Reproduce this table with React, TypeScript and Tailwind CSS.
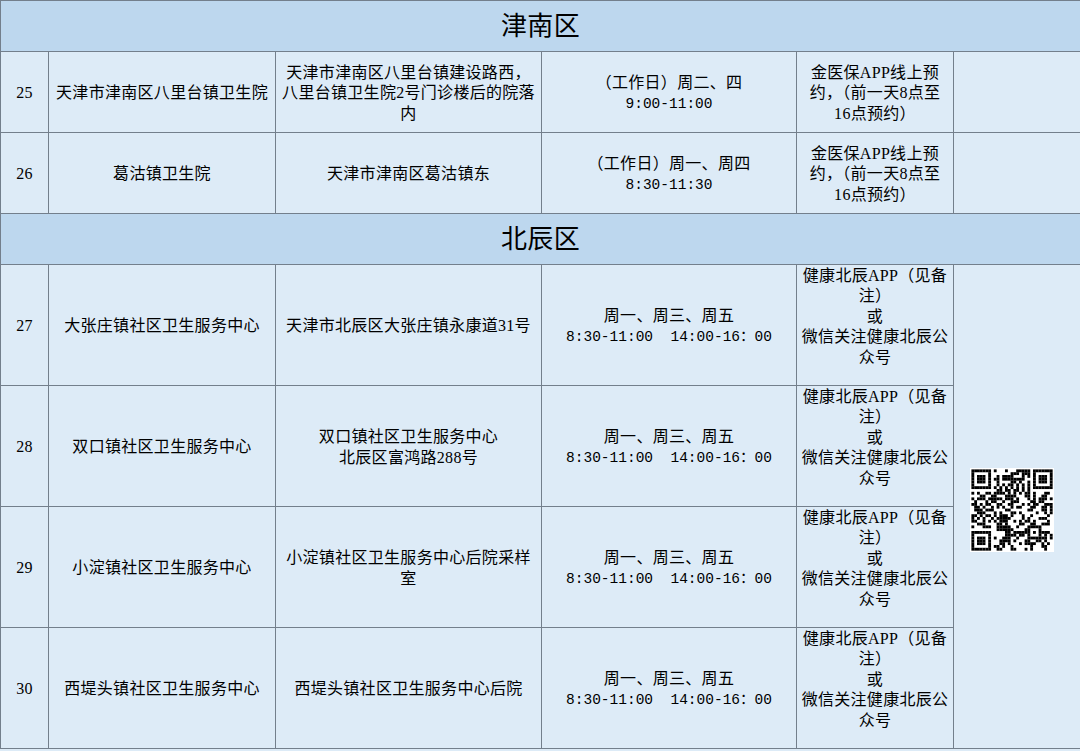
import React from 'react';

interface Site {
    no: number;
    name: string;
    addr: string[];
    time: string[];
    book: string[];
}

const jinnan: Site[] = [
    {
        no: 25,
        name: '天津市津南区八里台镇卫生院',
        addr: ['天津市津南区八里台镇建设路西，', '八里台镇卫生院2号门诊楼后的院落', '内'],
        time: ['（工作日）周二、四', '9:00-11:00'],
        book: ['金医保APP线上预', '约，（前一天8点至', '16点预约）'],
    },
    {
        no: 26,
        name: '葛沽镇卫生院',
        addr: ['天津市津南区葛沽镇东'],
        time: ['（工作日）周一、周四', '8:30-11:30'],
        book: ['金医保APP线上预', '约，（前一天8点至', '16点预约）'],
    },
];

const beichenBook = ['健康北辰APP（见备', '注）', '或', '微信关注健康北辰公', '众号'];
const beichenTime = ['周一、周三、周五', '8:30-11:00  14:00-16：00'];

const beichen: Site[] = [
    { no: 27, name: '大张庄镇社区卫生服务中心', addr: ['天津市北辰区大张庄镇永康道31号'], time: beichenTime, book: beichenBook },
    { no: 28, name: '双口镇社区卫生服务中心', addr: ['双口镇社区卫生服务中心', '北辰区富鸿路288号'], time: beichenTime, book: beichenBook },
    { no: 29, name: '小淀镇社区卫生服务中心', addr: ['小淀镇社区卫生服务中心后院采样', '室'], time: beichenTime, book: beichenBook },
    { no: 30, name: '西堤头镇社区卫生服务中心', addr: ['西堤头镇社区卫生服务中心后院'], time: beichenTime, book: beichenBook },
];

// fake qr pattern, 29 modules
function makeQr(): boolean[][] {
    const n = 29;
    let seed = 20220415;
    const rnd = () => {
        seed = (seed * 1103515245 + 12345) & 0x7fffffff;
        return seed / 0x7fffffff;
    };
    const m: boolean[][] = [];
    for (let y = 0; y < n; y++) {
        const row: boolean[] = [];
        for (let x = 0; x < n; x++) row.push(rnd() > 0.5);
        m.push(row);
    }
    const finder = (ox: number, oy: number) => {
        for (let y = -1; y <= 7; y++) {
            for (let x = -1; x <= 7; x++) {
                const yy = oy + y;
                const xx = ox + x;
                if (yy < 0 || xx < 0 || yy >= n || xx >= n) continue;
                const inRing = x >= 0 && x <= 6 && y >= 0 && y <= 6;
                const edge = x === 0 || x === 6 || y === 0 || y === 6;
                const core = x >= 2 && x <= 4 && y >= 2 && y <= 4;
                m[yy][xx] = inRing && (edge || core);
            }
        }
    };
    finder(0, 0);
    finder(n - 7, 0);
    finder(0, n - 7);
    for (let i = 8; i < n - 8; i++) {
        m[6][i] = i % 2 === 0;
        m[i][6] = i % 2 === 0;
    }
    for (let y = -2; y <= 2; y++) {
        for (let x = -2; x <= 2; x++) {
            m[22 + y][22 + x] = Math.max(Math.abs(x), Math.abs(y)) !== 1;
        }
    }
    return m;
}

const qr = makeQr();

function QrCode() {
    const s = 2.8;
    return (
        <svg width={84} height={84} viewBox="0 0 84 84" className="block">
            <rect width="84" height="84" fill="#ffffff" />
            {qr.map((row, y) =>
                row.map((on, x) =>
                    on ? (
                        <rect key={`${x}-${y}`} x={1.4 + x * s} y={1.4 + y * s} width={s + 0.05} height={s + 0.05} fill="#000" />
                    ) : null
                )
            )}
        </svg>
    );
}

const cell = 'border border-[#737f8c] text-center align-middle px-1 pt-[3px]';

function Lines({ lines }: { lines: string[] }) {
    return (
        <>
            {lines.map((l, i) => (
                <div key={i} className="whitespace-pre">
                    {l}
                </div>
            ))}
        </>
    );
}

function TimeLines({ lines }: { lines: string[] }) {
    return (
        <>
            <div className="whitespace-pre">{lines[0]}</div>
            <div className="whitespace-pre font-['Liberation_Mono','Noto_Sans_CJK_SC',monospace] text-[14.5px] tracking-normal">
                {lines[1]}
            </div>
        </>
    );
}

function Section({ title }: { title: string }) {
    return (
        <tr className="h-[51px] bg-[#bdd7ee]">
            <td colSpan={6} className="border border-[#737f8c] text-center align-middle pt-[3px]">
                <span className="font-['Noto_Sans_CJK_SC',sans-serif] text-[26px] text-black">{title}</span>
            </td>
        </tr>
    );
}

export default function App() {
    return (
        <div className="w-[1080px] h-[751px] overflow-hidden bg-[#ddebf7]">
            <table className="w-[1080px] table-fixed border-collapse bg-[#ddebf7] text-[16px] leading-[20.5px] tracking-[0.3px] text-black font-['Liberation_Serif','Noto_Sans_CJK_SC',serif]">
                <colgroup>
                    <col className="w-[48px]" />
                    <col className="w-[227px]" />
                    <col className="w-[266px]" />
                    <col className="w-[255px]" />
                    <col className="w-[157px]" />
                    <col className="w-[127px]" />
                </colgroup>
                <tbody>
                    <Section title="津南区" />
                    {jinnan.map((s) => (
                        <tr key={s.no} className="h-[81px]">
                            <td className={cell}>{s.no}</td>
                            <td className={cell}>{s.name}</td>
                            <td className={cell}>
                                <Lines lines={s.addr} />
                            </td>
                            <td className={cell}>
                                <TimeLines lines={s.time} />
                            </td>
                            <td className={cell}>
                                <Lines lines={s.book} />
                            </td>
                            <td className={cell}></td>
                        </tr>
                    ))}
                    <Section title="北辰区" />
                    {beichen.map((s, i) => (
                        <tr key={s.no} className="h-[121px]">
                            <td className={cell}>{s.no}</td>
                            <td className={cell}>{s.name}</td>
                            <td className={cell}>
                                <Lines lines={s.addr} />
                            </td>
                            <td className={cell}>
                                <TimeLines lines={s.time} />
                            </td>
                            <td className="border border-[#737f8c] text-center align-middle px-1 pb-[16px]">
                                <Lines lines={s.book} />
                            </td>
                            {i === 0 && (
                                <td rowSpan={4} className="border border-[#737f8c] align-middle pl-[16px] pt-[6px]">
                                    <QrCode />
                                </td>
                            )}
                        </tr>
                    ))}
                </tbody>
            </table>
        </div>
    );
}
